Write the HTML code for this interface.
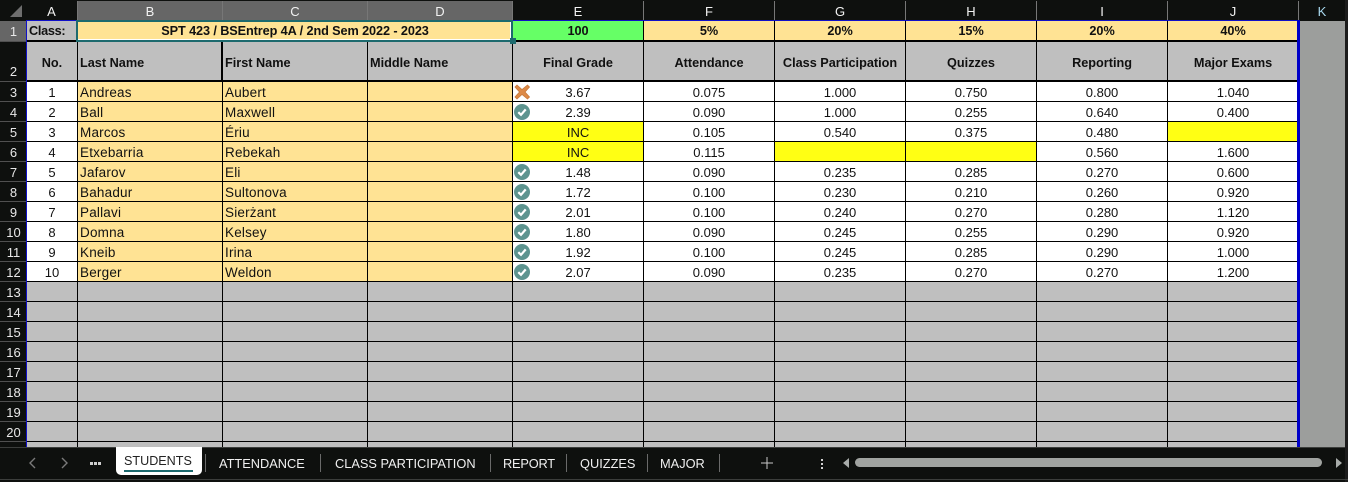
<!DOCTYPE html>
<html><head><meta charset="utf-8"><style>
html,body{margin:0;padding:0;background:#0e100e}
body{width:1348px;height:482px;position:relative;overflow:hidden;font-family:"Liberation Sans",sans-serif;font-size:13px;color:#111}
.a{position:absolute}
.ch{position:absolute;top:1px;height:19px;line-height:21px;text-align:center;color:#f2f2f2;font-size:13px;box-sizing:border-box;border-right:1px solid #777}
.ch.s{background:#666}
.rh{position:absolute;left:0;width:26px;height:20px;line-height:22px;text-align:center;color:#e8e8e8;font-size:13px;box-sizing:border-box;padding-left:1px;border-bottom:1px solid #505050}
#w{position:absolute;left:27px;top:21px;width:1271px;height:426px;overflow:hidden}
table{border-collapse:separate;border-spacing:0;table-layout:fixed;width:1271px}
td{box-sizing:border-box;padding:2px 0 0;border-right:1px solid #000;border-bottom:1px solid #000;text-align:center;height:20px;white-space:nowrap;overflow:hidden;background:#fff;line-height:17px}
td:last-child{border-right:0}
tr.r1 td{height:21px;border-bottom:2px solid #000;background:#ffe394;font-weight:bold;font-size:12.7px;padding-top:2px}
tr.r2 td{height:40px;border-bottom:2px solid #000;background:#bfbfbf;font-weight:bold;font-size:12.7px;padding-top:4px}
tr.g td{background:#bfbfbf}
td.o{background:#ffe394;text-align:left;padding-left:2px;font-size:13.5px;letter-spacing:.2px}
td.y{background:#ffff14}
td.l{text-align:left;padding-left:2px}
.t{position:absolute;top:456px;height:15px;line-height:15px;color:#f0f0f0;font-size:12.8px;white-space:nowrap}
.sp{position:absolute;top:454px;width:1px;height:18px;background:#6a6a6a}
</style></head><body>
<svg class="a" style="left:9px;top:4px" width="14" height="14"><path d="M13 1V13H1Z" fill="#6e6e6e"/></svg>
<div class="ch" style="left:26px;width:52px">A</div>
<div class="ch s" style="left:78px;width:145px">B</div>
<div class="ch s" style="left:223px;width:145px">C</div>
<div class="ch s" style="left:368px;width:145px">D</div>
<div class="ch" style="left:513px;width:131px">E</div>
<div class="ch" style="left:644px;width:131px">F</div>
<div class="ch" style="left:775px;width:131px">G</div>
<div class="ch" style="left:906px;width:131px">H</div>
<div class="ch" style="left:1037px;width:131px">I</div>
<div class="ch" style="left:1168px;width:131px">J</div>
<div class="ch" style="left:1299px;width:46px;border-right:0;color:#a8d8ee">K</div>
<div class="rh" style="top:21px;height:21px;background:#666;line-height:22px">1</div>
<div class="rh" style="top:42px;height:40px;line-height:59px">2</div>
<div class="rh" style="top:82px">3</div><div class="rh" style="top:102px">4</div><div class="rh" style="top:122px">5</div><div class="rh" style="top:142px">6</div><div class="rh" style="top:162px">7</div><div class="rh" style="top:182px">8</div><div class="rh" style="top:202px">9</div><div class="rh" style="top:222px">10</div><div class="rh" style="top:242px">11</div><div class="rh" style="top:262px">12</div><div class="rh" style="top:282px">13</div><div class="rh" style="top:302px">14</div><div class="rh" style="top:322px">15</div><div class="rh" style="top:342px">16</div><div class="rh" style="top:362px">17</div><div class="rh" style="top:382px">18</div><div class="rh" style="top:402px">19</div><div class="rh" style="top:422px">20</div>
<div class="a" style="left:1300px;top:21px;width:45px;height:426px;background:#9c9e9c"></div>
<div id="w"><table>
<colgroup><col style="width:51px"><col style="width:145px"><col style="width:145px"><col style="width:145px"><col style="width:131px"><col style="width:131px"><col style="width:131px"><col style="width:131px"><col style="width:131px"><col style="width:130px"></colgroup>
<tr class="r1"><td class="l" style="background:#bfbfbf;letter-spacing:-.3px">Class:</td><td colspan="3" style="letter-spacing:-.1px">SPT 423 / BSEntrep 4A / 2nd Sem 2022 - 2023</td><td style="background:#66ff66">100</td><td>5%</td><td>20%</td><td>15%</td><td>20%</td><td>40%</td></tr>
<tr class="r2"><td>No.</td><td class="l" style="background:#bfbfbf;border-right:2px solid #000">Last Name</td><td class="l" style="background:#bfbfbf">First Name</td><td class="l" style="background:#bfbfbf">Middle Name</td><td>Final Grade</td><td>Attendance</td><td>Class Participation</td><td>Quizzes</td><td>Reporting</td><td>Major Exams</td></tr>
<tr><td>1</td><td class="o">Andreas</td><td class="o">Aubert</td><td class="o"></td><td>3.67</td><td>0.075</td><td>1.000</td><td>0.750</td><td>0.800</td><td>1.040</td></tr>
<tr><td>2</td><td class="o">Ball</td><td class="o">Maxwell</td><td class="o"></td><td>2.39</td><td>0.090</td><td>1.000</td><td>0.255</td><td>0.640</td><td>0.400</td></tr>
<tr><td>3</td><td class="o">Marcos</td><td class="o">Ériu</td><td class="o"></td><td class="y">INC</td><td>0.105</td><td>0.540</td><td>0.375</td><td>0.480</td><td class="y"></td></tr>
<tr><td>4</td><td class="o">Etxebarria</td><td class="o">Rebekah</td><td class="o"></td><td class="y">INC</td><td>0.115</td><td class="y"></td><td class="y"></td><td>0.560</td><td>1.600</td></tr>
<tr><td>5</td><td class="o">Jafarov</td><td class="o">Eli</td><td class="o"></td><td>1.48</td><td>0.090</td><td>0.235</td><td>0.285</td><td>0.270</td><td>0.600</td></tr>
<tr><td>6</td><td class="o">Bahadur</td><td class="o">Sultonova</td><td class="o"></td><td>1.72</td><td>0.100</td><td>0.230</td><td>0.210</td><td>0.260</td><td>0.920</td></tr>
<tr><td>7</td><td class="o">Pallavi</td><td class="o">Sierżant</td><td class="o"></td><td>2.01</td><td>0.100</td><td>0.240</td><td>0.270</td><td>0.280</td><td>1.120</td></tr>
<tr><td>8</td><td class="o">Domna</td><td class="o">Kelsey</td><td class="o"></td><td>1.80</td><td>0.090</td><td>0.245</td><td>0.255</td><td>0.290</td><td>0.920</td></tr>
<tr><td>9</td><td class="o">Kneib</td><td class="o">Irina</td><td class="o"></td><td>1.92</td><td>0.100</td><td>0.245</td><td>0.285</td><td>0.290</td><td>1.000</td></tr>
<tr><td>10</td><td class="o">Berger</td><td class="o">Weldon</td><td class="o"></td><td>2.07</td><td>0.090</td><td>0.235</td><td>0.270</td><td>0.270</td><td>1.200</td></tr>
<tr class="g"><td></td><td></td><td></td><td></td><td></td><td></td><td></td><td></td><td></td><td></td></tr>
<tr class="g"><td></td><td></td><td></td><td></td><td></td><td></td><td></td><td></td><td></td><td></td></tr>
<tr class="g"><td></td><td></td><td></td><td></td><td></td><td></td><td></td><td></td><td></td><td></td></tr>
<tr class="g"><td></td><td></td><td></td><td></td><td></td><td></td><td></td><td></td><td></td><td></td></tr>
<tr class="g"><td></td><td></td><td></td><td></td><td></td><td></td><td></td><td></td><td></td><td></td></tr>
<tr class="g"><td></td><td></td><td></td><td></td><td></td><td></td><td></td><td></td><td></td><td></td></tr>
<tr class="g"><td></td><td></td><td></td><td></td><td></td><td></td><td></td><td></td><td></td><td></td></tr>
<tr class="g"><td></td><td></td><td></td><td></td><td></td><td></td><td></td><td></td><td></td><td></td></tr>
<tr class="g"><td></td><td></td><td></td><td></td><td></td><td></td><td></td><td></td><td></td><td></td></tr>
</table></div>
<div class="a" style="left:26px;top:20px;width:1px;height:427px;background:#1010c8"></div>
<div class="a" style="left:26px;top:20px;width:1273px;height:1px;background:#1010c8"></div>
<div class="a" style="left:1297px;top:20px;width:3px;height:427px;background:#0000c8"></div>
<div class="a" style="left:76px;top:20px;width:433px;height:18px;border:2px solid #1d6a6e;box-shadow:inset -1px -1px 0 #fff"></div>
<div class="a" style="left:510px;top:38px;width:6px;height:6px;background:#1d6a6e"></div>
<svg class="a" style="left:514px;top:83px" width="17" height="18" viewBox="0 0 17 18"><path d="M3 2L8 6.5L13.5 2L15.500 4L11 9L15.500 14L13.500 16L8 11.500L3 16L1 14L5.500 9L1 4Z" fill="#dd8a48" stroke="#c87a3c" stroke-width=".8"/></svg>
<svg class="a" style="left:514px;top:103px" width="17" height="18" viewBox="0 0 17 18"><circle cx="8" cy="9" r="8" fill="#5d9490"/><path d="M4.3 9.2L7 11.8L11.7 6.4" fill="none" stroke="#fff" stroke-width="2.2"/></svg>
<svg class="a" style="left:514px;top:163px" width="17" height="18" viewBox="0 0 17 18"><circle cx="8" cy="9" r="8" fill="#5d9490"/><path d="M4.3 9.2L7 11.8L11.7 6.4" fill="none" stroke="#fff" stroke-width="2.2"/></svg>
<svg class="a" style="left:514px;top:183px" width="17" height="18" viewBox="0 0 17 18"><circle cx="8" cy="9" r="8" fill="#5d9490"/><path d="M4.3 9.2L7 11.8L11.7 6.4" fill="none" stroke="#fff" stroke-width="2.2"/></svg>
<svg class="a" style="left:514px;top:203px" width="17" height="18" viewBox="0 0 17 18"><circle cx="8" cy="9" r="8" fill="#5d9490"/><path d="M4.3 9.2L7 11.8L11.7 6.4" fill="none" stroke="#fff" stroke-width="2.2"/></svg>
<svg class="a" style="left:514px;top:223px" width="17" height="18" viewBox="0 0 17 18"><circle cx="8" cy="9" r="8" fill="#5d9490"/><path d="M4.3 9.2L7 11.8L11.7 6.4" fill="none" stroke="#fff" stroke-width="2.2"/></svg>
<svg class="a" style="left:514px;top:243px" width="17" height="18" viewBox="0 0 17 18"><circle cx="8" cy="9" r="8" fill="#5d9490"/><path d="M4.3 9.2L7 11.8L11.7 6.4" fill="none" stroke="#fff" stroke-width="2.2"/></svg>
<svg class="a" style="left:514px;top:263px" width="17" height="18" viewBox="0 0 17 18"><circle cx="8" cy="9" r="8" fill="#5d9490"/><path d="M4.3 9.2L7 11.8L11.7 6.4" fill="none" stroke="#fff" stroke-width="2.2"/></svg>
<div class="a" style="left:1345px;top:0;width:3px;height:482px;background:#1c1c1c"></div>
<div class="a" style="left:0;top:447px;width:1345px;height:1px;background:#3c3e3c"></div>
<div class="a" style="left:0;top:479px;width:1348px;height:1px;background:#3c3e3c"></div>
<svg class="a" style="left:26px;top:456px" width="80" height="14"><path d="M9 2L4 7L9 12M36 2L41 7L36 12" fill="none" stroke="#7a7a7a" stroke-width="1.4"/><path d="M64 6h3v3h-3zM68 6h3v3h-3zM72 6h3v3h-3z" fill="#cfcfcf"/></svg>
<div class="a" style="left:116px;top:447px;width:86px;height:28px;background:#fff;border-radius:0 0 5px 5px"></div>
<div class="t" style="left:124px;top:454px;color:#222;font-size:12.6px">STUDENTS</div>
<div class="a" style="left:124px;top:470px;width:69px;height:2px;background:#1d6a6e"></div>
<div class="sp" style="left:205px"></div>
<div class="t" style="left:219px">ATTENDANCE</div><div class="sp" style="left:320px"></div>
<div class="t" style="left:335px">CLASS PARTICIPATION</div><div class="sp" style="left:490px"></div>
<div class="t" style="left:503px;letter-spacing:-.2px">REPORT</div><div class="sp" style="left:566px"></div>
<div class="t" style="left:580px">QUIZZES</div><div class="sp" style="left:647px"></div>
<div class="t" style="left:660px">MAJOR</div><div class="sp" style="left:719px"></div>
<svg class="a" style="left:760px;top:456px" width="14" height="14"><path d="M7 1V13M1 7H13" stroke="#c8c8c8" stroke-width="1"/></svg>
<svg class="a" style="left:820px;top:457px" width="5" height="14"><path d="M1 2h2v2H1zM1 6h2v2H1zM1 10h2v2H1z" fill="#d0d0d0"/></svg>
<svg class="a" style="left:842px;top:457px" width="8" height="12"><path d="M7 1V11L1 6Z" fill="#a8acaa"/></svg>
<div class="a" style="left:855px;top:458px;width:467px;height:9px;border-radius:5px;background:#a0a3a0"></div>
<svg class="a" style="left:1335px;top:457px" width="8" height="12"><path d="M1 1V11L7 6Z" fill="#a8acaa"/></svg>
</body></html>
